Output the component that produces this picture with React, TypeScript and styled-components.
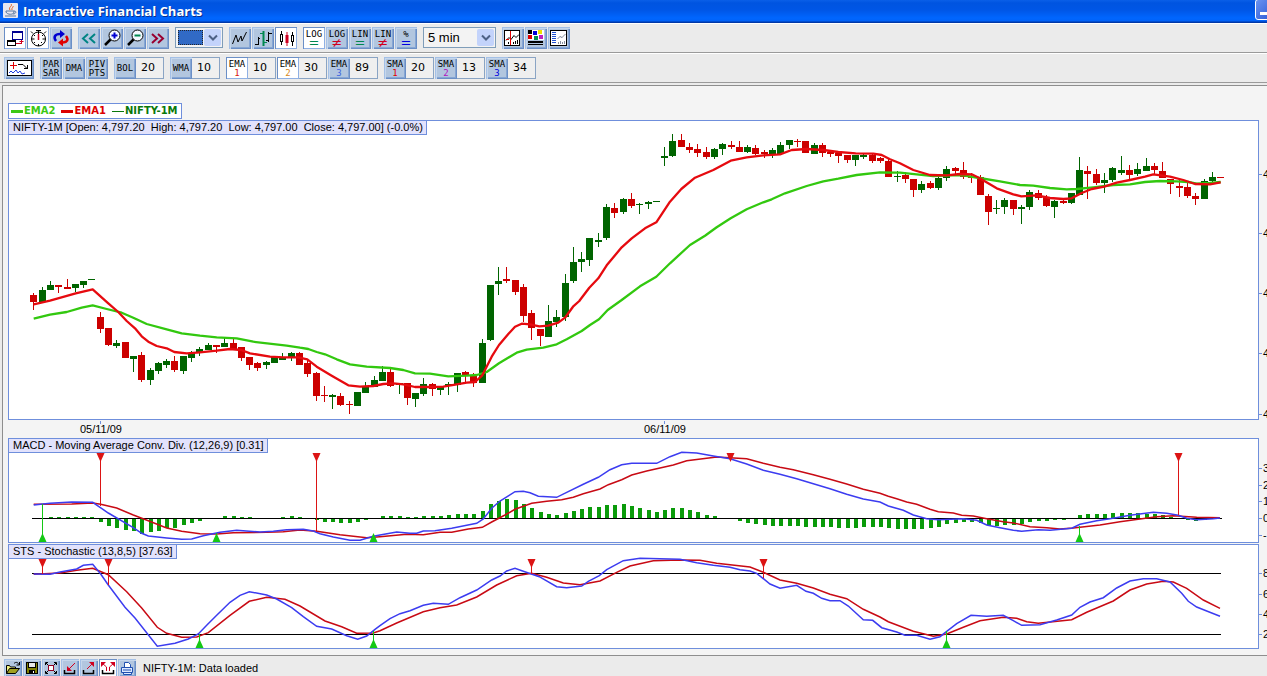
import React from 'react';
import styled, { createGlobalStyle } from 'styled-components';

const SANS = '"Liberation Sans", Arial, sans-serif';
const MONO = '"DejaVu Sans Mono", monospace';

const GlobalStyle = createGlobalStyle`
  *, *::before, *::after { box-sizing: border-box; }
  body { margin: 0; background: #ebebeb; overflow: hidden; font-family: ${SANS}; color: #000; }
  svg { display: block; }
`;

/* ---------- window frame ---------- */

const Window = styled.div`
  display: flex;
  flex-direction: column;
  width: 100%;
  overflow: hidden;
`;

const TitleBar = styled.header`
  display: flex;
  align-items: center;
  height: 23px;
  padding: 0 0 2px 2px;
  gap: 4px;
  overflow: hidden;
  background: linear-gradient(#0a5fe8 0, #0054e0 3px, #0056e6 10px, #0066ff 18px, #0062f8 21px, #0038a8 22px, #0038a8 23px);
`;

const TitleText = styled.h1`
  flex: 1;
  margin: 0;
  font: bold 13px/18px "Open Sans", sans-serif;
  color: #fff;
  text-shadow: 1px 1px 0 #0a2f8c;
  white-space: nowrap;
`;

const MinimiseButton = styled.button`
  flex: none;
  width: 21px;
  height: 21px;
  margin: 0 -9px 2px 0;
  padding: 0;
  border: 1px solid #fff;
  border-radius: 3px;
  background: linear-gradient(135deg, #6a93f0, #2a56d4);
`;

const ToolBar = styled.div`
  display: flex;
  align-items: center;
  gap: 6px;
  height: 30px;
  padding: 0 4px;
  background: #ebebeb;
  border-bottom: 1px solid #9a9a9a;
  box-shadow: inset 0 1px 0 #fff;
`;

const Group = styled.div`
  display: flex;
  gap: 1px;
`;

const ToolButton = styled.button<{ $active?: boolean; $width?: number; $size?: number }>`
  display: flex;
  flex: none;
  flex-direction: column;
  align-items: center;
  justify-content: center;
  width: ${(p) => p.$width ?? p.$size ?? 22}px;
  height: ${(p) => p.$size ?? 22}px;
  padding: 0;
  border: 0;
  color: #000;
  background: ${(p) => (p.$active ? '#fff' : '#b2c6df')};
  box-shadow: ${(p) =>
    p.$active
      ? 'inset 1px 1px 0 #6b8fc6, inset -1px -1px 0 #8fb0e4'
      : 'inset 1px 1px 0 #a4c0e6, inset 2px 2px 0 #c6d7ec, inset -1px -1px 0 #6b8fc6, inset -2px -2px 0 #86a6d4'};
`;

const TextButton = styled(ToolButton)`
  padding-top: 2px;
  font: 9px/9px ${MONO};
`;

const Tint = styled.span<{ $color: string }>`
  color: ${(p) => p.$color};
`;

const ScaleSign = styled(Tint)`
  font: 13px/8px "DejaVu Sans", sans-serif;
`;

const Pair = styled.div`
  display: flex;
`;

const Field = styled.input`
  width: 28px;
  height: 22px;
  padding: 0 0 0 5px;
  border: 1px solid #8aa4c4;
  border-left-width: 0;
  background: #efefef;
  font: 11px/18px "DejaVu Sans", sans-serif;
  color: #000;
`;

const SelectFrame = styled.div<{ $width: number }>`
  position: relative;
  width: ${(p) => p.$width}px;
  height: 21px;
`;

const Select = styled.select`
  appearance: none;
  width: 100%;
  height: 100%;
  padding: 0 20px 0 4px;
  border: 1px solid #7f9db9;
  border-radius: 0;
  background: #f3f3f3;
  font: 13px/18px ${SANS};
  color: #000;
`;

const SelectArrow = styled.span`
  position: absolute;
  top: 2px;
  right: 2px;
  pointer-events: none;
`;

const Swatch = styled.span`
  position: absolute;
  top: 3px;
  left: 3px;
  width: 25px;
  height: 15px;
  border: 1px dotted #20242c;
  background: #316ac5;
  pointer-events: none;
`;

/* ---------- chart area ---------- */

const ChartArea = styled.main`
  display: flex;
  flex-direction: column;
  align-items: stretch;
  margin: 2px 0 1px 2px;
  padding: 17px 0 5px 5px;
  border: solid #8e8e8e;
  border-width: 1px 0 1px 1px;
  background: #f4f4f4;
`;

const Legend = styled.ul`
  display: flex;
  align-self: flex-start;
  align-items: center;
  gap: 6px;
  height: 16px;
  margin: 0 0 1px;
  padding: 0 3px 0 2px;
  border: 1px solid #6f8fdc;
  background: #fff;
  list-style: none;
`;

const LegendItem = styled.li<{ $color: string; $line: number }>`
  display: flex;
  align-items: center;
  font: bold 10px/12px "DejaVu Sans", sans-serif;
  color: ${(p) => p.$color};
  white-space: nowrap;

  &::before {
    content: '';
    width: 12px;
    height: ${(p) => p.$line}px;
    margin-right: 1px;
    background: ${(p) => p.$color};
  }
`;

const PanelRow = styled.section`
  display: flex;
  margin-bottom: 1px;
`;

const Panel = styled.div`
  position: relative;
  flex: 1;
  min-width: 0;
  border: 1px solid #6f8fdc;
  background: #fff;
`;

const PanelTitle = styled.h2`
  position: absolute;
  top: 0;
  left: 0;
  margin: 0;
  padding: 0 3px 0 4px;
  border: solid #6f8fdc;
  border-width: 0 1px 1px 0;
  background: #e2e2fc;
  font: 11px/13px ${SANS};
  white-space: pre;
`;

const AxisText = styled.text`
  font: 11px ${SANS};
  fill: #000;
`;

const StatusBar = styled.footer`
  display: flex;
  align-items: center;
  gap: 1px;
  height: 21px;
  padding: 0 4px;
  background: #ebebeb;
`;

const StatusText = styled.output`
  margin-left: 6px;
  font: 11px/16px ${SANS};
  white-space: nowrap;
`;

/* ---------- market data ---------- */

const FIRST_X = 34.3;
const STEP = 8.3;
const slotX = (i: number) => Math.round(FIRST_X + i * STEP);

// high, body top, body bottom, low; a leading minus marks a falling candle
const candles: number[][] = [
  [-293, 295, 302, 310], [287, 290, 302, 303], [281, 285, 290, 290], [-285, 285, 287, 293], [-279, 287, 289, 289],
  [284, 284, 288, 292], [281, 281, 285, 288], [279, 279, 280, 280], [-312, 317, 329, 333], [-328, 328, 345, 346],
  [340, 343, 346, 348], [-342, 342, 358, 358], [356, 356, 359, 372], [-352, 355, 380, 382], [368, 370, 380, 385],
  [362, 363, 371, 374], [359, 361, 365, 368], [-356, 361, 370, 372], [356, 356, 371, 374], [351, 353, 358, 362],
  [347, 349, 353, 356], [343, 345, 350, 350], [-345, 345, 347, 353], [338, 343, 347, 347], [-339, 343, 350, 350],
  [-347, 347, 358, 361], [-357, 357, 365, 370], [-362, 363, 368, 371], [361, 362, 365, 369], [357, 357, 363, 363],
  [353, 357, 360, 360], [352, 353, 358, 361], [-352, 353, 365, 365], [-360, 363, 374, 377], [-372, 373, 396, 401],
  [-386, 395, 396, 402], [394, 395, 397, 409], [-393, 396, 405, 406], [-401, 404, 405, 414], [392, 392, 406, 406],
  [382, 386, 393, 393], [376, 380, 387, 387], [366, 372, 381, 381], [-369, 372, 386, 387], [383, 383, 385, 394],
  [-383, 383, 398, 405], [393, 393, 399, 407], [378, 384, 394, 396], [-383, 384, 389, 396], [386, 386, 390, 395],
  [382, 384, 386, 395], [373, 373, 385, 392], [-371, 372, 375, 382], [-373, 375, 383, 387], [339, 343, 383, 383],
  [285, 285, 340, 341], [267, 281, 284, 295], [-267, 279, 281, 283], [-280, 280, 292, 295], [-284, 287, 316, 322],
  [-310, 313, 328, 340], [-329, 329, 336, 346], [305, 321, 337, 337], [310, 317, 322, 327], [274, 283, 317, 321],
  [247, 262, 281, 283], [252, 259, 262, 272], [238, 238, 260, 266], [233, 240, 242, 247], [204, 207, 238, 240],
  [-203, 208, 213, 218], [198, 199, 212, 214], [-193, 199, 206, 208], [203, 204, 205, 214], [201, 202, 204, 209],
  [201, 201, 202, 202], [147, 156, 158, 166], [134, 141, 156, 157], [-134, 140, 147, 147], [-143, 147, 150, 153],
  [-144, 149, 153, 157], [-147, 152, 157, 159], [148, 149, 157, 159], [143, 144, 149, 155], [-141, 145, 147, 149],
  [-141, 147, 152, 152], [145, 147, 152, 153], [-145, 148, 154, 155], [-150, 152, 154, 158], [148, 150, 155, 158],
  [142, 145, 154, 154], [140, 140, 145, 149], [-139, 141, 142, 147], [-141, 141, 153, 153], [143, 145, 154, 154],
  [-143, 145, 153, 157], [-150, 152, 154, 157], [-152, 153, 156, 163], [-155, 155, 160, 163], [155, 155, 160, 166],
  [153, 155, 157, 159], [-154, 155, 161, 163], [-157, 158, 161, 163], [-159, 161, 177, 177], [171, 176, 177, 182],
  [-172, 175, 179, 183], [-179, 179, 190, 197], [181, 184, 190, 193], [-181, 183, 188, 189], [177, 178, 188, 190],
  [166, 169, 178, 181], [-167, 168, 171, 175], [-162, 170, 177, 179], [-173, 176, 178, 183], [-175, 177, 195, 195],
  [-194, 196, 212, 225], [200, 208, 209, 214], [198, 200, 207, 214], [-200, 200, 209, 215], [205, 207, 209, 224],
  [190, 192, 207, 210], [-190, 193, 198, 200], [-195, 197, 206, 207], [200, 201, 207, 218], [-199, 201, 203, 204],
  [193, 193, 203, 204], [157, 170, 195, 195], [-166, 171, 174, 199], [-169, 174, 183, 185], [173, 180, 183, 193],
  [167, 168, 180, 182], [156, 170, 173, 175], [-165, 170, 175, 180], [163, 169, 174, 176], [158, 166, 171, 171],
  [-163, 166, 170, 174], [-162, 171, 178, 178], [-179, 179, 184, 194], [-180, 186, 188, 197], [-182, 187, 196, 198],
  [-193, 196, 199, 205], [179, 181, 199, 199], [172, 177, 181, 182], [-177, 177, 178, 178],
];

const histogram = [
  0, 0, 1, 1, 1, 1, 1, 1, -3, -7, -9, -11, -12, -15, -13, -12, -9, -9, -6, -4, -2, 0, 0, 2, 2, 1, 1, 0, 0, 0, 1, 2, 1, 0,
  -1, -3, -3, -4, -4, -3, -1, 0, 2, 2, 2, 1, 1, 2, 2, 2, 3, 4, 4, 4, 7, 14, 17, 19, 18, 14, 10, 6, 4, 3, 5, 7, 9, 11, 11,
  13, 13, 14, 12, 10, 8, 6, 8, 10, 10, 8, 6, 3, 2, 0, 0, -2, -4, -5, -6, -7, -7, -7, -7, -8, -8, -8, -8, -9, -9, -9, -8,
  -8, -8, -9, -10, -10, -10, -10, -9, -8, -5, -4, -3, -3, -4, -6, -7, -6, -6, -5, -3, -2, -2, -1, -1, 0, 3, 4, 4, 4, 5, 5,
  5, 5, 4, 4, 3, 1, 0, -1, -2, -1, 0, 0,
];

// Each run holds an origin and x,y pairs in thirds of a pixel from it.
type Run = [number, number, number[]];
const trace = (...runs: Run[]) => {
  const out: string[] = [];
  runs.forEach(([ox, oy, v]) => {
    for (let k = 0; k < v.length; k += 2) {
      out.push(`${(ox + v[k] / 3).toFixed(1)},${(oy + v[k + 1] / 3).toFixed(1)}`);
    }
  });
  return out.join(' ');
};

const ema1 = trace(
  [0, 270, [101,103,150,92,227,70,278,58,325,100,355,126,380,153,405,175,425,199,445,215,470,228,500,235,523,246,560,250,600,247,650,242,690,237,724,240,750,250,810,260,850,262,895,262]],
  [300, 250, [22,328,50,350,95,377,145,406,180,410,220,408,250,402,280,400,310,403,345,411,390,411,430,410,470,403,500,398,525,396,547,376,575,320,597,285,625,252,645,230,665,221,690,223,718,229,745,227,775,218,795,203,819,170,838,153]],
  [580, 120, [0,540,28,503,55,475,80,436,125,382,155,355,195,325,229,307,270,245,304,207,345,173,400,150,452,122,500,112,550,106,600,103,635,90,680,87,730,90,775,96,827,100,880,101,905,105,930,118]],
  [900, 120, [0,130,40,150,90,165,140,166,180,162,215,163,238,174,290,205,340,223,364,229,410,226,450,234,490,237,515,235,545,219,575,207,613,200,650,188,690,180,735,170,760,163,810,170,850,180,885,192,930,193,962,187]],
);

const ema2 = trace(
  [0, 270, [101,146,150,134,200,126,245,113,278,106,320,117,365,128,400,143,440,162,500,178,545,190,600,197,650,202,710,205,760,215,860,227,895,232]],
  [300, 250, [0,293,25,297,50,306,75,313,110,328,150,343,200,350,270,354,310,360,345,370,390,371,445,379,500,377,530,375,560,366,597,340,650,308,680,299,730,293,770,283,800,268,845,243,870,225,897,208]],
  [580, 120, [83,570,125,540,180,499,229,470,270,430,330,375,375,347,410,322,452,295,500,268,550,247,575,238,615,220,680,198,730,184,775,176,830,165,900,157,955,158]],
  [900, 120, [0,158,50,163,100,168,150,166,190,166,238,174,300,184,360,195,400,197,450,204,500,208,530,207,580,202,640,195,690,193,735,186,780,183,830,184,865,186,890,191,930,189,962,186]],
);

const macd = trace(
  [0, 430, [101,225,150,220,215,216,278,217,300,232,325,249,400,293,425,310,445,318,500,324,545,328,575,327,610,317,660,307,710,301,780,306,820,304,860,299,910,298,940,303,960,311,1000,321,1050,331,1080,331,1120,319]],
  [380, 430, [0,315,50,306,90,310,110,310,130,303,165,302,215,295,260,286,290,280,310,267,335,235,360,213,405,185,430,184,450,188,475,199,530,202,560,187,610,163,655,142,690,119,725,104,755,100,830,100,870,80,905,67,950,69,1000,78,1050,86,1100,102,1150,121]],
  [780, 430, [0,133,50,146,75,154,150,176,200,193,250,207,300,216,325,228,370,241,400,255,440,266,475,269,550,266,590,271,620,285,660,293,700,301,725,304,775,299,810,301,875,295,900,283,950,272,990,266,1050,256,1120,247,1160,250,1195,256,1220,265,1250,269,1300,266,1320,264]],
);

const macdSignal = trace(
  [0, 430, [101,223,215,222,278,219,302,223,350,234,400,255,445,272,500,294,545,304,600,311,650,312,700,308,800,307,850,305,900,300,950,304,1020,314,1100,323]],
  [380, 430, [0,320,80,313,130,314,180,307,215,307,265,297,307,292,335,276,375,255,405,238,455,220,500,214,545,209,580,202,610,191,660,177,685,164,725,149,755,135,800,123,880,105,920,92,1010,81,1100,86,1150,100]],
  [780, 430, [0,112,40,119,100,134,150,148,200,162,250,178,300,190,325,199,350,206,380,216,410,223,450,238,475,245,520,249,545,256,580,258,620,266,670,275,700,279,750,290,800,293,840,297,880,294,960,285,1020,275,1080,267,1130,260,1180,257,1250,262,1320,263]],
);

const stochastic = trace(
  [0, 430, [101,432,150,433,180,426,230,417,250,406,278,403,302,432,325,465,375,532,405,564,472,649,525,640,565,627,595,612,620,586,650,556,690,517,720,496,748,485,800,495,830,507,875,533,910,560,950,589,995,597,1040,617,1073,628,1100,618,1125,598]],
  [380, 430, [0,587,30,566,60,551,90,542,130,526,160,520,205,523,240,503,290,480,335,450,360,438,380,423,405,415,430,424,478,440,530,470,560,473,605,468,625,454,658,437,680,419,730,392,780,385,900,388,950,398,1000,406,1050,412,1080,419,1110,423,1130,430,1170,462]],
  [780, 430, [0,475,50,466,78,484,100,490,125,505,150,512,180,512,205,528,250,569,278,571,305,593,350,606,375,616,410,616,450,628,480,620,500,604,530,581,573,556,620,559,670,556,700,572,725,586,780,584,830,570,875,555,900,532,930,516,970,503,1010,474,1050,453,1090,446,1130,446,1170,456,1205,490,1225,514,1250,531,1280,543,1320,559]],
);

const stochasticSignal = trace(
  [0, 430, [101,433,180,429,230,421,278,415,325,434,380,485,425,534,472,592,500,610,545,622,590,621,625,608,690,556,748,514,800,502,855,508,900,528,975,573,1025,590,1070,610,1120,609]],
  [380, 430, [0,602,50,579,130,545,180,533,230,525,290,501,350,465,410,437,455,430,500,442,550,459,600,464,660,453,710,427,750,408,820,392,900,390,960,391,1010,400,1110,411,1150,427]],
  [780, 430, [0,450,50,460,100,474,150,493,200,506,250,538,300,561,325,575,400,604,460,619,500,612,550,592,600,572,670,562,710,565,740,575,775,580,875,569,920,547,1000,513,1050,480,1100,462,1150,454,1180,456,1220,475,1270,510,1320,535]],
);

/* ---------- chart parts ---------- */

const CandleMark = ({ index, data }: { index: number; data: number[] }) => {
  const color = data[0] < 0 ? '#cc0000' : '#006400';
  const high = Math.abs(data[0]);
  const x = slotX(index);
  return (
    <g fill={color}>
      <rect x={x - 1} y={high} width={1} height={data[3] - high} />
      <rect x={x - 4} y={data[1]} width={7} height={Math.max(1, data[2] - data[1])} />
    </g>
  );
};

const SellMark = ({ x, top, to }: { x: number; top: number; to: number }) => (
  <g>
    <rect x={x} y={top} width={1} height={to - top} fill="#dc1414" />
    <polygon points={`${x - 3.5},${top} ${x + 4.5},${top} ${x + 0.5},${top + 9}`} fill="#dc1414" />
  </g>
);

const BuyMark = ({ x, bottom, from }: { x: number; bottom: number; from: number }) => (
  <g>
    <rect x={x} y={from} width={1} height={bottom - from} fill="#14c814" />
    <polygon points={`${x - 3.5},${bottom} ${x + 4.5},${bottom} ${x + 0.5},${bottom - 9}`} fill="#14c814" />
  </g>
);

type ChartPanelProps = {
  title: string;
  top: number;
  height: number;
  ticks: [number, string][];
  children: React.ReactNode;
};

const ChartPanel = ({ title, top, height, ticks, children }: ChartPanelProps) => (
  <PanelRow>
    <Panel>
      <svg width="100%" height={height - 2} role="img" aria-label={title}>
        <g transform={`translate(-9 ${-top - 1})`}>{children}</g>
      </svg>
      <PanelTitle>{title}</PanelTitle>
    </Panel>
    <svg width={8} height={height} aria-hidden="true">
      {ticks.map(([y, label]) => (
        <g key={y}>
          <rect x={0} y={y - top} width={3} height={1} fill="#6f8fdc" />
          <AxisText x={4} y={y - top + 4}>{label}</AxisText>
        </g>
      ))}
    </svg>
  </PanelRow>
);

const DateAxis = () => (
  <svg width="100%" height={17} aria-label="Dates">
    <rect x={92} y={0} width={1} height={3} fill="#6f8fdc" />
    <rect x={656} y={0} width={1} height={3} fill="#6f8fdc" />
    <AxisText x={93} y={12} textAnchor="middle">05/11/09</AxisText>
    <AxisText x={657} y={12} textAnchor="middle">06/11/09</AxisText>
  </svg>
);

/* ---------- icons ---------- */

const Icon = ({ width = 22, size = 22, children }: { width?: number; size?: number; children: React.ReactNode }) => (
  <svg width={width} height={size} fill="none" stroke="#000" aria-hidden="true">
    {children}
  </svg>
);

const JavaIcon = () => (
  <svg width={17} height={17} fill="none" aria-hidden="true">
    <rect x={1} y={1} width={15} height={15} rx={1} fill="#e8e8f0" />
    <path d="M9 2c2 2-3 3-1 6M11 4c1 1-2 2-1 4" stroke="#e06020" />
    <path d="M4 9h8v1c0 3-7 3-8 0zM12 9c3 0 2 3-1 3M3 14h11" stroke="#5878a0" />
  </svg>
);

const WindowsIcon = () => (
  <Icon>
    <rect x={8.5} y={4.5} width={10} height={8} stroke="#000090" />
    <path d="M8 5.5h11" stroke="#000090" />
    <rect x={3.5} y={13.5} width={8} height={5} />
    <path d="M3 14.5h9" />
    <path d="M12 16.5h6M17.5 13v4M15.5 14.500h4" stroke="#d00020" />
  </Icon>
);

const StopwatchIcon = () => (
  <Icon>
    <circle cx={11.5} cy={12} r={7} />
    <path d="M9 3.500h5M11.5 3v2M4 4.500l2 2M19 4.500l-2 2M11.5 5v2M11.5 17v2M4.500 12h3M15.500 12h3M7 16l1-1M15 16l-1-1M7 8l1 1M16 8l-1 1" />
    <path d="M11.500 13V7" stroke="#d00020" strokeWidth={1.500} />
  </Icon>
);

const RefreshIcon = () => (
  <Icon>
    <path d="M6 14c-3-4-1-7 4-7" stroke="#0000d0" strokeWidth={2.500} />
    <path d="M10 3l5 4-5 4z" fill="#0000d0" stroke="none" />
    <path d="M16 9c3 4 1 6-3 6.500" stroke="#e00000" strokeWidth={2.500} />
    <path d="M13 11.500v8l-5-4z" fill="#e00000" stroke="none" />
  </Icon>
);

const ChevronsIcon = ({ forward }: { forward?: boolean }) => (
  <Icon>
    <path
      d={forward ? 'M5 7l5 4.500-5 4.500M11 7l5 4.500-5 4.500' : 'M10 7l-5 4.500 5 4.500M17 7l-5 4.500 5 4.500'}
      stroke={forward ? '#980030' : '#008484'}
      strokeWidth={2}
    />
  </Icon>
);

const ZoomIcon = ({ plus }: { plus?: boolean }) => (
  <Icon>
    <path d="M10 12l-6 6" strokeWidth={2.500} />
    <circle cx={13.500} cy={8.500} r={5.500} fill="#f4f8ff" />
    <path
      d={plus ? 'M10.500 8.500h6M13.500 5.500v6' : 'M10.500 8.500h6'}
      stroke={plus ? '#0000d0' : '#008850'}
      strokeWidth={2}
    />
  </Icon>
);

const LineIcon = () => (
  <Icon>
    <path d="M3.500 17l3.500-9 2 7 3-6 1 5 4.500-9" />
  </Icon>
);

const BarsIcon = () => (
  <Icon>
    <path d="M6.500 10v8M3 17.500h3M6 11.500h2M16.500 5v10M14 13.500h2M17 6.500h3" />
    <path d="M11.500 4v15" stroke="#008850" strokeWidth={2} />
    <path d="M8 6.500h3M12 15.500h3" stroke="#008850" />
  </Icon>
);

const CandlesIcon = () => (
  <Icon>
    <path d="M6.500 4v3M6.500 14v4M17.500 5v3M17.500 15v4" />
    <rect x={5.500} y={7.500} width={2} height={7} />
    <rect x={16.500} y={8.500} width={2} height={6} />
    <path d="M12 5v14" stroke="#d00020" />
    <rect x={10.500} y={8} width={3} height={8} fill="#d00020" stroke="none" />
  </Icon>
);

const CursorChartIcon = () => (
  <Icon>
    <rect x={2.500} y={3.500} width={15} height={15} fill="#fff" />
    <path d="M4 13.500l3-3 2 2 3-4 2 2 3-3M6.500 17v-2M11.500 17v-2M13.500 17v-3M15.500 17v-4" />
    <path d="M8.500 4v14M4 12.500h3" stroke="#e00000" />
  </Icon>
);

const PaletteIcon = () => (
  <Icon>
    <g stroke="none">
      <rect x={3} y={3} width={16} height={10} fill="#fff" />
      <rect x={3} y={3} width={4} height={4} fill="#000" />
      <rect x={8} y={4} width={4} height={4} fill="#0000d8" />
      <rect x={13} y={3} width={4} height={4} fill="#f0e000" />
      <rect x={3} y={8} width={4} height={4} fill="#e00000" />
      <rect x={9} y={9} width={4} height={4} fill="#009050" />
      <rect x={14} y={8} width={4} height={4} fill="#c020c0" />
      <rect x={3} y={14} width={15} height={2} fill="#000" />
      <rect x={3} y={17} width={15} height={1} fill="#000" />
    </g>
  </Icon>
);

const ListChartIcon = () => (
  <Icon>
    <rect x={2.500} y={3.500} width={16} height={15} fill="#fff" />
    <path d="M4 5.500h4M4 7.500h4M4 9.500h4M4 11.500h4M4 13.500h4M4 15.500h4" stroke="#2050d0" />
    <path d="M9.500 12l3-3 1 2 4-4M10.500 17v-2M12.500 17v-3M14.500 17v-2M16.500 17v-3" stroke="#8890a0" />
  </Icon>
);

const OverlayIcon = () => (
  <Icon width={30}>
    <rect x={3.500} y={3.500} width={24} height={15} fill="#fff" />
    <path d="M6 8.500h7M9.500 5v7" stroke="#e00000" />
    <path d="M14 7.500h5l4 4M23.500 8v4M20 11.500h4" />
    <path d="M5 16l2-2 2 2 3-3 2 3 2-2 2 3 3-1" stroke="#2040e0" />
  </Icon>
);

const ArrowIcon = () => (
  <svg width={17} height={17} aria-hidden="true">
    <rect width={17} height={17} rx={2} fill="#c3d3fb" />
    <path d="M5 6.500l4 4 4-4" fill="none" stroke="#4d6185" strokeWidth={2} />
  </svg>
);

const OpenIcon = () => (
  <Icon size={18} width={18}>
    <path d="M2.500 14.500v-8h3l1 1.500h5v2" fill="#f0f080" />
    <path d="M2.500 14.500l3-5h10l-4 5z" fill="#a0a020" />
    <path d="M10 4.500c2-2 4-1 5 1M15.500 3v3h-3" />
  </Icon>
);

const SaveIcon = () => (
  <Icon size={18} width={18}>
    <rect x={3.500} y={3.500} width={11} height={11} fill="#808000" />
    <rect x={5.500} y={3.500} width={7} height={5} fill="#e8e8e8" />
    <rect x={6} y={11} width={6} height={4} fill="#000" stroke="none" />
    <rect x={10} y={12} width={1} height={2} fill="#fff" stroke="none" />
  </Icon>
);

const FitIcon = () => (
  <Icon size={18} width={18}>
    <path d="M3.500 6V3.500H6M12 3.500h2.500V6M14.500 12v2.500H12M6 14.500H3.500V12M4 4l2 2M14 4l-2 2M4 14l2-2M14 14l-2-2" />
    <rect x={6.500} y={6.500} width={5} height={5} fill="#fff" stroke="#900020" />
  </Icon>
);

const ArrowTrayIcon = ({ out }: { out?: boolean }) => (
  <Icon size={18} width={18}>
    <path d="M3.500 11v3.500h10V11" strokeWidth={1.500} />
    <path d={out ? 'M7 10l6-6' : 'M14 4L8 10'} stroke="#d00020" />
    <path d={out ? 'M14 3v5l-5-5z' : 'M6 12V7l5 5z'} fill="#d00020" stroke="none" />
  </Icon>
);

const ExpandIcon = () => (
  <Icon size={18} width={18}>
    <path d="M3.500 11v3.500h11V11" strokeWidth={1.500} />
    <path d="M7.500 12V8L3 4M10.500 12V8L15 4" stroke="#d00020" />
    <path d="M2 3h5l-5 5zM16 3h-5l5 5z" fill="#d00020" stroke="none" />
  </Icon>
);

const PrintIcon = () => (
  <Icon size={18} width={18}>
    <path d="M6.500 8.500v-5h4l2 2v3" fill="#fff" stroke="#2050b0" />
    <path d="M3.500 8.500h11v5h-11zM5.500 13.500h8v2h-8zM5 11h8" fill="#dce8ff" stroke="#2050b0" />
  </Icon>
);

/* ---------- controls ---------- */

const scales = [
  { name: 'LOG', sign: '=', color: '#008850', label: 'Logarithmic, equal scale', active: true },
  { name: 'LOG', sign: '≠', color: '#d00020', label: 'Logarithmic, own scale' },
  { name: 'LIN', sign: '=', color: '#008850', label: 'Linear, equal scale' },
  { name: 'LIN', sign: '≠', color: '#d00020', label: 'Linear, own scale' },
  { name: '%', sign: '=', color: '#0000e0', label: 'Percent scale' },
];

type Study = { name: string; value: string; sub?: string; color?: string; active?: boolean };
const studyGroups: Study[][] = [
  [{ name: 'BOL', value: '20' }],
  [{ name: 'WMA', value: '10' }],
  [
    { name: 'EMA', sub: '1', color: '#d82010', value: '10', active: true },
    { name: 'EMA', sub: '2', color: '#d88820', value: '30', active: true },
    { name: 'EMA', sub: '3', color: '#3c64e0', value: '89' },
  ],
  [
    { name: 'SMA', sub: '1', color: '#e00000', value: '20' },
    { name: 'SMA', sub: '2', color: '#b010c0', value: '13' },
    { name: 'SMA', sub: '3', color: '#0000e0', value: '34' },
  ],
];

const StudyControl = ({ study }: { study: Study }) => {
  const label = `${study.name} ${study.sub ?? ''}`.trim();
  return (
    <Pair>
      <TextButton $active={study.active} aria-pressed={!!study.active} title={label}>
        <span>{study.name}</span>
        {study.sub && <Tint $color={study.color!}>{study.sub}</Tint>}
      </TextButton>
      <Field aria-label={`${label} period`} defaultValue={study.value} />
    </Pair>
  );
};

export default function App() {
  return (
    <Window>
      <GlobalStyle />
      <TitleBar>
        <JavaIcon />
        <TitleText>Interactive Financial Charts</TitleText>
        <MinimiseButton aria-label="Minimise">
          <svg width={19} height={19} aria-hidden="true">
            <rect x={4} y={12} width={8} height={3} fill="#fff" />
          </svg>
        </MinimiseButton>
      </TitleBar>

      <ToolBar>
        <Group>
          <ToolButton $active title="Windows"><WindowsIcon /></ToolButton>
          <ToolButton $active title="Timer"><StopwatchIcon /></ToolButton>
          <ToolButton title="Refresh"><RefreshIcon /></ToolButton>
        </Group>
        <Group>
          <ToolButton title="Scroll back"><ChevronsIcon /></ToolButton>
          <ToolButton title="Zoom in"><ZoomIcon plus /></ToolButton>
          <ToolButton title="Zoom out"><ZoomIcon /></ToolButton>
          <ToolButton title="Scroll forward"><ChevronsIcon forward /></ToolButton>
        </Group>
        <SelectFrame $width={48}>
          <Select aria-label="Line colour"><option value="blue" aria-label="Blue" /></Select>
          <Swatch />
          <SelectArrow><ArrowIcon /></SelectArrow>
        </SelectFrame>
        <Group>
          <ToolButton title="Line chart"><LineIcon /></ToolButton>
          <ToolButton title="Bar chart"><BarsIcon /></ToolButton>
          <ToolButton $active title="Candlestick chart"><CandlesIcon /></ToolButton>
        </Group>
        <Group>
          {scales.map((s) => (
            <TextButton key={s.label} $active={s.active} title={s.label}>
              <span>{s.name}</span>
              <ScaleSign $color={s.color}>{s.sign}</ScaleSign>
            </TextButton>
          ))}
        </Group>
        <SelectFrame $width={73}>
          <Select aria-label="Interval"><option>5 min</option></Select>
          <SelectArrow><ArrowIcon /></SelectArrow>
        </SelectFrame>
        <Group>
          <ToolButton title="Cursor"><CursorChartIcon /></ToolButton>
          <ToolButton title="Colours"><PaletteIcon /></ToolButton>
          <ToolButton title="Data list"><ListChartIcon /></ToolButton>
        </Group>
      </ToolBar>

      <ToolBar>
        <ToolButton $width={30} title="Overlays"><OverlayIcon /></ToolButton>
        <Group>
          <TextButton title="Parabolic SAR"><span>PAR</span><span>SAR</span></TextButton>
          <TextButton title="DMA"><span>DMA</span></TextButton>
          <TextButton title="Pivot points"><span>PIV</span><span>PTS</span></TextButton>
        </Group>
        {studyGroups.map((group) => (
          <Group key={group[0].name}>
            {group.map((s) => <StudyControl key={s.name + s.sub} study={s} />)}
          </Group>
        ))}
      </ToolBar>

      <ChartArea>
        <Legend>
          <LegendItem $color="#3cc814" $line={3}>EMA2</LegendItem>
          <LegendItem $color="#dc0000" $line={3}>EMA1</LegendItem>
          <LegendItem $color="#0a780a" $line={1}>NIFTY-1M</LegendItem>
        </Legend>

        <ChartPanel
          title="NIFTY-1M [Open: 4,797.20  High: 4,797.20  Low: 4,797.00  Close: 4,797.00] (-0.0%)"
          top={120}
          height={300}
          ticks={[[174, '4'], [233, '4'], [293, '4'], [353, '4'], [414, '4']]}
        >
          {candles.map((c, i) => <CandleMark key={i} index={i} data={c} />)}
          <polyline points={ema2} fill="none" stroke="#32c80f" strokeWidth={2.300} strokeLinejoin="round" />
          <polyline points={ema1} fill="none" stroke="#e60a0f" strokeWidth={2.300} strokeLinejoin="round" />
        </ChartPanel>

        <DateAxis />

        <ChartPanel
          title="MACD - Moving Average Conv. Div. (12,26,9) [0.31]"
          top={438}
          height={105}
          ticks={[[468, '3'], [485, '2'], [501, '1'], [518, '0'], [535, '-']]}
        >
          {histogram.map((v, i) =>
            v === 0 ? null : (
              <rect key={i} x={slotX(i) - 2} y={v > 0 ? 518 - v : 519} width={4} height={Math.abs(v)} fill="#0a9b0a" />
            ),
          )}
          <rect x={32} y={518} width={1190} height={1} fill="#000" />
          <polyline points={macdSignal} fill="none" stroke="#c80a14" strokeWidth={1.500} />
          <polyline points={macd} fill="none" stroke="#3c3cf0" strokeWidth={1.500} />
          <SellMark x={100} top={453} to={506} />
          <SellMark x={316} top={453} to={532} />
          <SellMark x={730} top={453} to={461} />
          <SellMark x={1178} top={453} to={515} />
          <BuyMark x={42} bottom={542} from={504} />
          <BuyMark x={216} bottom={542} from={533} />
          <BuyMark x={373} bottom={542} from={534} />
          <BuyMark x={1079} bottom={542} from={526} />
        </ChartPanel>

        <ChartPanel
          title="STS - Stochastic (13,8,5) [37.63]"
          top={544}
          height={105}
          ticks={[[573, '8'], [594, '6'], [614, '4'], [634, '2']]}
        >
          <rect x={32} y={573} width={1189} height={1} fill="#000" />
          <rect x={32} y={634} width={1189} height={1} fill="#000" />
          <polyline points={stochasticSignal} fill="none" stroke="#c80a14" strokeWidth={1.500} />
          <polyline points={stochastic} fill="none" stroke="#3c3cf0" strokeWidth={1.500} />
          <SellMark x={42} top={559} to={574} />
          <SellMark x={108} top={559} to={585} />
          <SellMark x={531} top={559} to={574} />
          <SellMark x={763} top={559} to={578} />
          <BuyMark x={199} bottom={648} from={634} />
          <BuyMark x={373} bottom={648} from={631} />
          <BuyMark x={946} bottom={648} from={631} />
        </ChartPanel>
      </ChartArea>

      <StatusBar>
        <ToolButton $size={18} title="Open"><OpenIcon /></ToolButton>
        <ToolButton $size={18} title="Save"><SaveIcon /></ToolButton>
        <ToolButton $size={18} title="Fit"><FitIcon /></ToolButton>
        <ToolButton $size={18} title="Import"><ArrowTrayIcon /></ToolButton>
        <ToolButton $size={18} title="Export"><ArrowTrayIcon out /></ToolButton>
        <ToolButton $size={18} $active title="Expand"><ExpandIcon /></ToolButton>
        <ToolButton $size={18} title="Print"><PrintIcon /></ToolButton>
        <StatusText>NIFTY-1M: Data loaded</StatusText>
      </StatusBar>
    </Window>
  );
}
